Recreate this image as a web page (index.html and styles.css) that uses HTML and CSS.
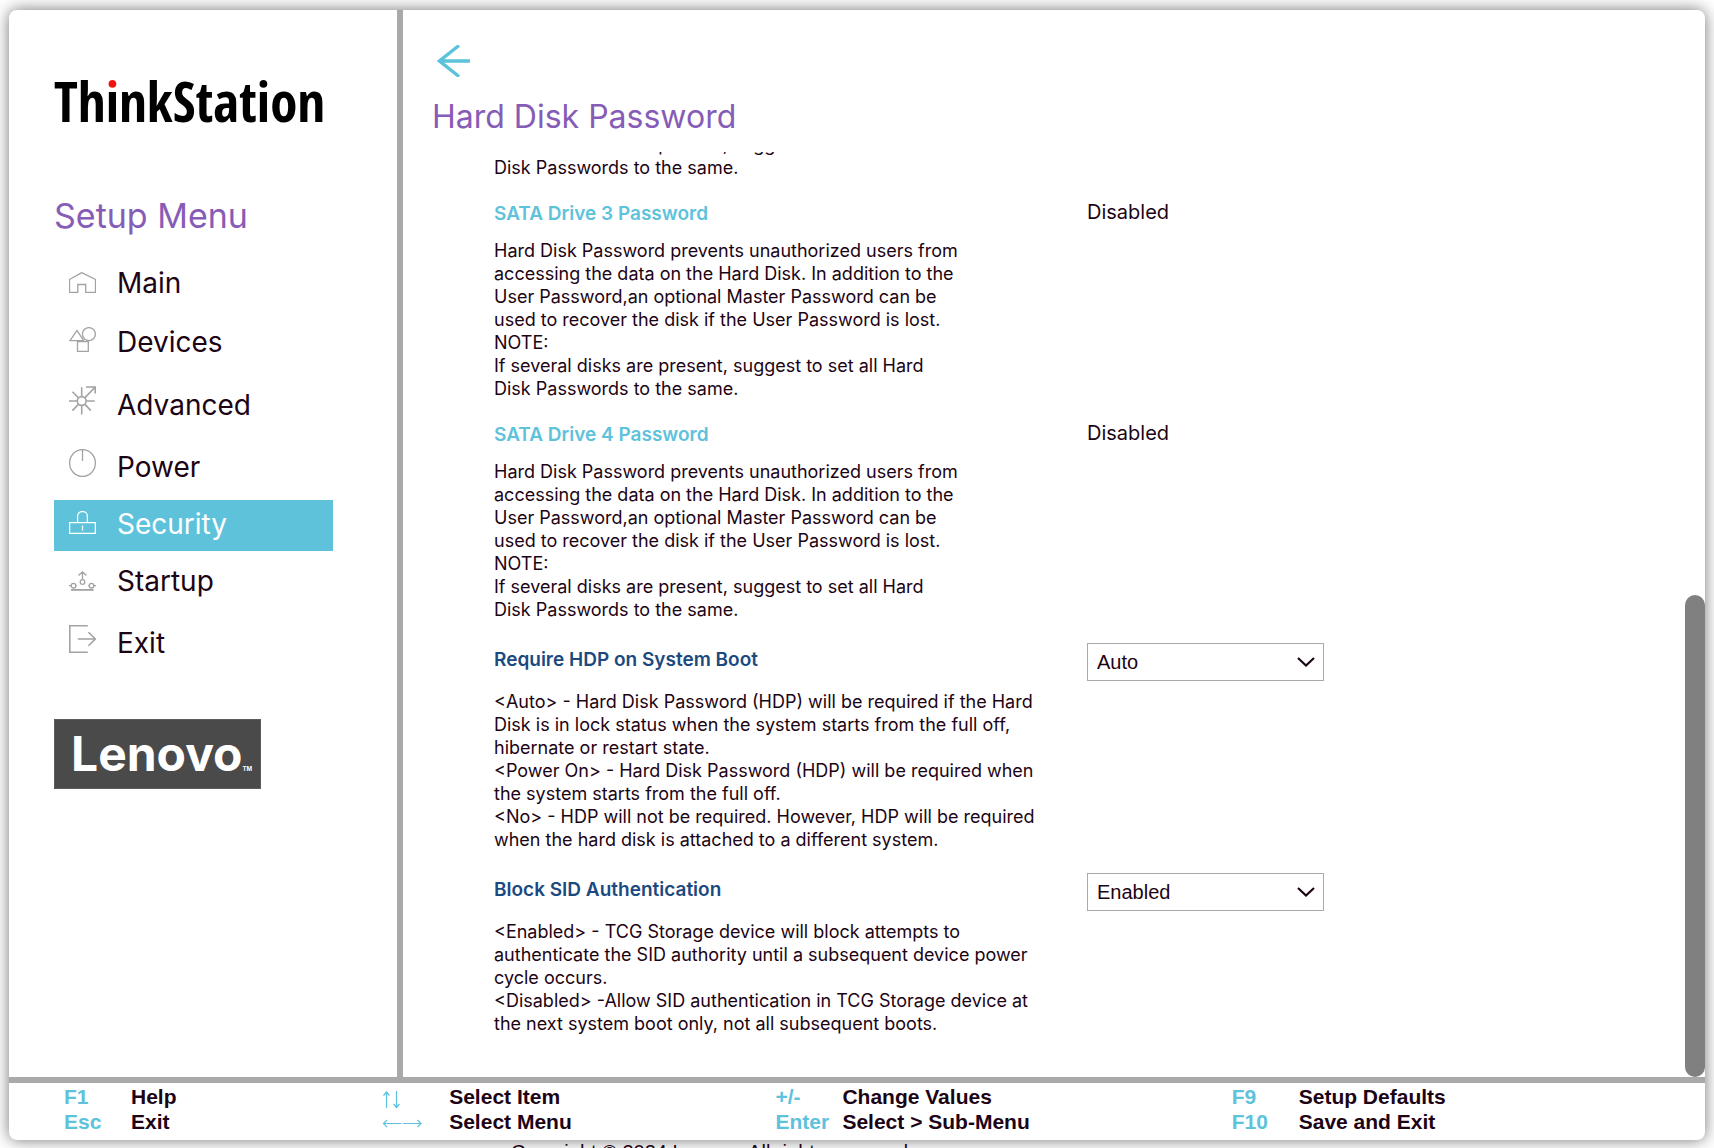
FILE: index.html
```html
<!DOCTYPE html>
<html lang="en">
<head>
<meta charset="utf-8">
<meta name="viewport" content="width=device-width, initial-scale=1">
<title>ThinkStation Setup - Hard Disk Password</title>
<link rel="stylesheet" href="styles.css">
</head>
<body>
<div class="page">
  <div class="card">
    <div class="columns">
      <aside class="sidebar">
        <div class="brand">Th<span class="brand-i">i</span>nkStation</div>
        <h2 class="title menu-title">Setup Menu</h2>
        <nav class="menu">
          <a class="menu-item" href="#main">
            <svg class="icon" width="27" height="21" viewBox="0 0 27 21"><path d="M.5 7.5 12.7.6 26.5 7.5V20.4H16.7V12.5H8.8V20.4H.5Z"/></svg>
            <span>Main</span>
          </a>
          <a class="menu-item" href="#devices">
            <svg class="icon" width="27" height="25" viewBox="0 0 27 25"><path d="M1 13.6 8 3.4 14.6 13.6ZM8.5 14.7H19.3V24.4H8.5Z"/><circle cx="19.9" cy="7.1" r="6.5"/></svg>
            <span>Devices</span>
          </a>
          <a class="menu-item" href="#advanced">
            <svg class="icon icon-heavy" width="27" height="29" viewBox="0 0 27 29"><circle cx="12.7" cy="15" r="4.4"/><path d="M12.7 1.2V10.6M12.7 19.4V28.5M0 15H8.3M17.1 15H25.7M3.4 5.8 9.6 11.9M3.4 24.6 9.6 18.1M21.8 24.6 15.8 18.1M15.8 11.9 26.2 1M17 1H26.2V7.6"/></svg>
            <span>Advanced</span>
          </a>
          <a class="menu-item" href="#power">
            <svg class="icon" width="27" height="28" viewBox="0 0 27 28"><ellipse cx="13.5" cy="14" rx="12.9" ry="13.4"/><path d="M13.5.6V12"/></svg>
            <span>Power</span>
          </a>
          <a class="menu-item menu-item-active" href="#security" aria-current="page">
            <svg class="icon" width="27" height="23" viewBox="0 0 27 23"><path d="M.6 11.6H26.4V22.4H.6ZM8.6 11.6V5A4.4 4.4 0 0 1 13 .6H14A4.4 4.4 0 0 1 18.4 5V11.6M13.5 14.4V19.6"/></svg>
            <span>Security</span>
          </a>
          <a class="menu-item" href="#startup">
            <svg class="icon" width="27" height="20" viewBox="0 0 27 20"><path d="M13.5 8.6V1M9.4 4.6 13.5.9 17.5 4.6M0 14.7H2.2M6.8 14.7H7.6M19.4 14.7H20.2M24.8 14.7H27"/><circle cx="13.5" cy="11" r="2.3"/><circle cx="4.5" cy="14.7" r="2.3"/><circle cx="22.5" cy="14.7" r="2.3"/><path class="icon-base" d="M2 18.9H24.6"/></svg>
            <span>Startup</span>
          </a>
          <a class="menu-item" href="#exit">
            <svg class="icon icon-heavy" width="27" height="28" viewBox="0 0 27 28"><path d="M18.8.8H.8V27.2H18.8M8.8 14H26.4M19.4 7.2 26.4 14 19.4 20.8"/></svg>
            <span>Exit</span>
          </a>
        </nav>
        <div class="maker">Lenovo<span class="maker-tm">TM</span></div>
      </aside>

      <main class="main">
        <div class="content">
          <button class="back" type="button" aria-label="Back">
            <svg width="33" height="32" viewBox="0 0 33 32"><path d="M33 16H2.5M22 .5 2.5 16 22 31.5"/></svg>
          </button>
          <h1 class="title">Hard Disk Password</h1>
          <div class="settings">
            <section class="setting">
              <p class="note">If several disks are present, suggest to set all Hard<br>Disk Passwords to the same.</p>
            </section>
            <section class="setting">
              <h3 class="name name-readonly">SATA Drive 3 Password</h3>
              <span class="value">Disabled</span>
              <p class="note">Hard Disk Password prevents unauthorized users from<br>accessing the data on the Hard Disk. In addition to the<br>User Password,an optional Master Password can be<br>used to recover the disk if the User Password is lost.<br>NOTE:<br>If several disks are present, suggest to set all Hard<br>Disk Passwords to the same.</p>
            </section>
            <section class="setting">
              <h3 class="name name-readonly">SATA Drive 4 Password</h3>
              <span class="value">Disabled</span>
              <p class="note">Hard Disk Password prevents unauthorized users from<br>accessing the data on the Hard Disk. In addition to the<br>User Password,an optional Master Password can be<br>used to recover the disk if the User Password is lost.<br>NOTE:<br>If several disks are present, suggest to set all Hard<br>Disk Passwords to the same.</p>
            </section>
            <section class="setting">
              <label class="name" for="hdp">Require HDP on System Boot</label>
              <div class="picker">
                <select class="select" id="hdp"><option>Auto</option><option>Power On</option><option>No</option></select>
                <svg class="chevron" width="18" height="10" viewBox="0 0 18 10"><path d="M1 1 9 8.5 17 1"/></svg>
              </div>
              <p class="note">&lt;Auto&gt; - Hard Disk Password (HDP) will be required if the Hard<br>Disk is in lock status when the system starts from the full off,<br>hibernate or restart state.<br>&lt;Power On&gt; - Hard Disk Password (HDP) will be required when<br>the system starts from the full off.<br>&lt;No&gt; - HDP will not be required. However, HDP will be required<br>when the hard disk is attached to a different system.</p>
            </section>
            <section class="setting">
              <label class="name" for="sid">Block SID Authentication</label>
              <div class="picker">
                <select class="select" id="sid"><option>Enabled</option><option>Disabled</option></select>
                <svg class="chevron" width="18" height="10" viewBox="0 0 18 10"><path d="M1 1 9 8.5 17 1"/></svg>
              </div>
              <p class="note">&lt;Enabled&gt; - TCG Storage device will block attempts to<br>authenticate the SID authority until a subsequent device power<br>cycle occurs.<br>&lt;Disabled&gt; -Allow SID authentication in TCG Storage device at<br>the next system boot only, not all subsequent boots.</p>
            </section>
          </div>
        </div>
        <div class="track"><div class="thumb"></div></div>
      </main>
    </div>

    <footer class="keys">
      <dl class="key-group">
        <dt>F1</dt><dd>Help</dd>
        <dt>Esc</dt><dd>Exit</dd>
      </dl>
      <dl class="key-group">
        <dt><svg class="arrows" width="40" height="25" viewBox="0 0 40 25" role="img" aria-label="Up and down"><path d="M4.5 24V8M1.5 11.5 4.5 8 7.5 11.5M14.5 7V23.5M11.5 20 14.5 23.5 17.5 20"/></svg></dt><dd>Select Item</dd>
        <dt><svg class="arrows" width="40" height="25" viewBox="0 0 40 25" role="img" aria-label="Left and right"><path d="M19.5 14.5H1.5M5 11 1.5 14.5 5 18M21 14.5H39M35.5 11 39 14.5 35.5 18"/></svg></dt><dd>Select Menu</dd>
      </dl>
      <dl class="key-group">
        <dt>+/-</dt><dd>Change Values</dd>
        <dt>Enter</dt><dd>Select &gt; Sub-Menu</dd>
      </dl>
      <dl class="key-group">
        <dt>F9</dt><dd>Setup Defaults</dd>
        <dt>F10</dt><dd>Save and Exit</dd>
      </dl>
    </footer>
  </div>
  <p class="copyright">Copyright © 2024 Lenovo. All rights reserved.</p>
</div>
</body>
</html>
```
FILE: styles.css
```css
:root {
  --ink: #1d0414;
  --cyan: #5ec2db;
  --purple: #865cb6;
  --navy: #1b4a80;
  --rule: #a9a9a9;
}

* { box-sizing: border-box; }

body {
  margin: 0;
  background: #fff;
  color: var(--ink);
  font-family: Inter, "Liberation Sans", sans-serif;
}

h1, h2, h3, p, dl, dd { margin: 0; }

.page {
  display: flex;
  flex-direction: column;
  height: 100vh;
  padding: 10px 9px 8px;
  overflow: hidden;
}

.card {
  flex: 1;
  min-height: 0;
  display: flex;
  flex-direction: column;
  background: #fff;
  border-radius: 8px;
  box-shadow: 0 0 16px rgba(0, 0, 0, .55);
}

.columns {
  flex: 1;
  min-height: 0;
  display: flex;
}

.title {
  font-size: 32px;
  line-height: 40px;
  font-weight: 400;
  color: var(--purple);
}

/* Sidebar */
.sidebar {
  flex: none;
  width: 394px;
  padding: 56px 64px 0 45px;
  border-right: 6px solid var(--rule);
}

.brand {
  height: 69px;
  font: 700 55px/69px "Open Sans Condensed", "Roboto Condensed", sans-serif;
  color: #000;
  white-space: nowrap;
}

.brand-i {
  background: linear-gradient(#f0140f 36%, #000 36%);
  -webkit-background-clip: text;
  background-clip: text;
  color: transparent;
}

.menu-title {
  margin-top: 61px;
  font-size: 34px;
}

.menu {
  display: flex;
  flex-direction: column;
  gap: 6px;
  margin-top: 23px;
}

.menu-item {
  display: flex;
  align-items: baseline;
  gap: 21px;
  padding: 11px 15px 14px;
  font-size: 28px;
  line-height: 26px;
  color: inherit;
  text-decoration: none;
}

.menu-item-active {
  background: var(--cyan);
  color: #fff;
}

.icon {
  flex: none;
  fill: none;
  stroke: #a3a3a3;
  stroke-width: 1.3;
}

.icon-heavy { stroke-width: 1.6; }
.icon-base { stroke-width: 1.8; }
.menu-item-active .icon { stroke: #fff; }

.maker {
  display: flex;
  align-items: baseline;
  width: 207px;
  height: 70px;
  margin-top: 49px;
  padding-left: 16px;
  border: 1px solid #5c5c5c;
  background: #4a4a4a;
  color: #fff;
  font-size: 48px;
  line-height: 68px;
  font-weight: 700;
}

.maker-tm {
  font-size: 6px;
  line-height: 8px;
}

/* Settings panel */
.main {
  flex: 1;
  min-width: 0;
  display: flex;
}

.content {
  flex: 1;
  min-width: 0;
  display: flex;
  flex-direction: column;
  padding: 35px 5px 0 29px;
}

.back {
  align-self: flex-start;
  height: 32px;
  margin: 0 0 20px 5px;
  padding: 0;
  border: 0;
  background: none;
}

.back svg {
  display: block;
  fill: none;
  stroke: var(--cyan);
  stroke-width: 3.4;
}

/* The list is shown scrolled to its end. */
.settings {
  flex: 1;
  min-height: 0;
  display: flex;
  flex-direction: column;
  justify-content: flex-end;
  gap: 22px;
  margin-top: 15px;
  padding: 0 0 42px 62px;
  overflow: hidden;
}

.setting {
  flex: none;
  display: grid;
  grid-template-columns: 1fr 1fr;
  row-gap: 9px;
}

.name {
  padding-top: 5px;
  font-size: 19px;
  line-height: 23px;
  font-weight: 600;
  color: var(--navy);
}

.name-readonly {
  padding: 1px 0 5px;
  color: var(--cyan);
}

.value {
  font-size: 20px;
  line-height: 23px;
}

.note {
  grid-column: 1;
  font-size: 18px;
  line-height: 23px;
  white-space: nowrap;
}

.picker {
  position: relative;
  width: 237px;
}

.select {
  display: block;
  width: 100%;
  height: 38px;
  padding: 0 36px 0 9px;
  border: 1px solid var(--rule);
  border-radius: 0;
  background: #fff;
  color: var(--ink);
  font: 20px "Liberation Sans", Arial, sans-serif;
  appearance: none;
}

.chevron {
  position: absolute;
  top: 14px;
  right: 9px;
  fill: none;
  stroke: var(--ink);
  stroke-width: 2.2;
  pointer-events: none;
}

.track {
  flex: none;
  display: flex;
  align-items: flex-end;
  width: 20px;
}

.thumb {
  width: 100%;
  height: 45.2%;
  border-radius: 10px;
  background: #808080;
}

/* Key legend */
.keys {
  flex: none;
  display: grid;
  grid-template-columns: 318fr 393fr 456fr 473fr;
  padding: 1px 0 6px 55px;
  border-top: 6px solid var(--rule);
  font: 700 21px/25px "Liberation Sans", Arial, sans-serif;
}

.key-group {
  display: grid;
  grid-template-columns: 67px 1fr;
}

.key-group dt { color: var(--cyan); }

.arrows {
  display: block;
  fill: none;
  stroke: var(--cyan);
  stroke-width: 1.2;
}

.copyright {
  flex: none;
  height: 0;
  padding-left: 502px;
  font: 20px/24px "Liberation Sans", Arial, sans-serif;
  white-space: nowrap;
}
```
